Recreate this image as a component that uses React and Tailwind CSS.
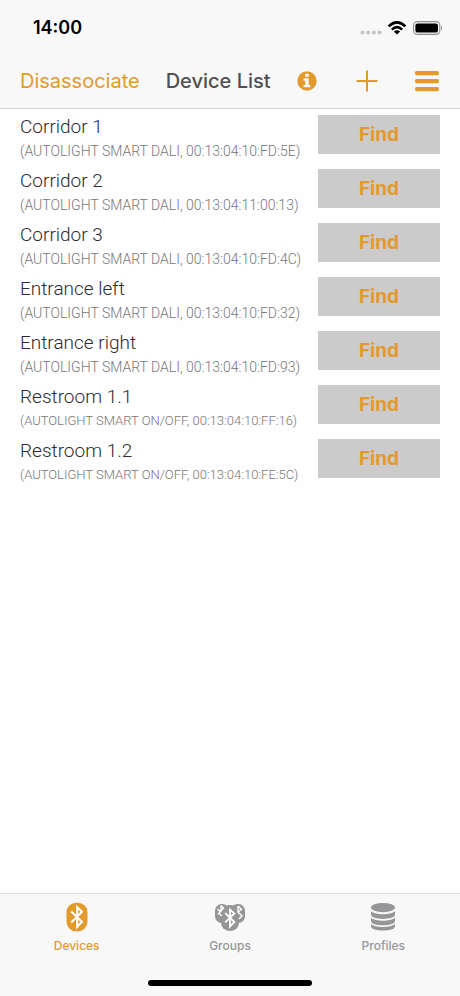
import React, { useState } from 'react';
import clsx from 'clsx';

const devices = [
  { name: 'Corridor 1', model: 'AUTOLIGHT SMART DALI', mac: '00:13:04:10:FD:5E' },
  { name: 'Corridor 2', model: 'AUTOLIGHT SMART DALI', mac: '00:13:04:11:00:13' },
  { name: 'Corridor 3', model: 'AUTOLIGHT SMART DALI', mac: '00:13:04:10:FD:4C' },
  { name: 'Entrance left', model: 'AUTOLIGHT SMART DALI', mac: '00:13:04:10:FD:32' },
  { name: 'Entrance right', model: 'AUTOLIGHT SMART DALI', mac: '00:13:04:10:FD:93' },
  { name: 'Restroom 1.1', model: 'AUTOLIGHT SMART ON/OFF', mac: '00:13:04:10:FF:16' },
  { name: 'Restroom 1.2', model: 'AUTOLIGHT SMART ON/OFF', mac: '00:13:04:10:FE:5C' },
];

const StatusBar = () => (
  <div className="flex h-14 items-center justify-between pr-4 pl-[33px]">
    <span className="text-[18px] leading-6 font-semibold text-black">14:00</span>
    <div className="flex items-center gap-1">
      <svg width="22" height="14" viewBox="0 0 22 14" className="fill-[#c4c4c6]">
        <circle cx="2.5" cy="11.5" r="2" />
        <circle cx="8.2" cy="11.5" r="2" />
        <circle cx="13.9" cy="11.5" r="2" />
        <circle cx="19.6" cy="11.5" r="2" />
      </svg>
      <svg width="22" height="14" viewBox="-2 0 22 14" fill="none" stroke="#000" strokeWidth="2.6">
        <path d="M0.6 5.4 Q9 -2.6 17.4 5.4" />
        <path d="M3.8 8.6 Q9 3.8 14.2 8.6" />
        <path d="M9 13.6 L5.9 10.5 Q9 8 12.1 10.5 Z" fill="#000" stroke="none" />
      </svg>
      <svg width="32" height="14" viewBox="-1 0 32 14">
        <rect x="0.6" y="0.6" width="26.2" height="12.8" rx="3.8" fill="none" stroke="#8e8e90" strokeWidth="1.1" />
        <rect x="2.4" y="2.4" width="22.6" height="9.2" rx="2.2" />
        <path d="M28 4.6 Q30.2 7 28 9.4 Z" fill="#8e8e90" />
      </svg>
    </div>
  </div>
);

const NavBar = () => (
  <div className="flex h-[52px] items-center gap-[26px] px-5 pb-0.5 text-[#e39a2d]">
    <button type="button" className="text-[20px] leading-6">Disassociate</button>
    <h1 className="text-[20px] leading-6 font-medium text-[#505052]">Device List</h1>
    <button type="button" aria-label="Information">
      <svg width="20" height="20" viewBox="0 0 20 20">
        <circle cx="10" cy="10" r="9.7" fill="currentColor" />
        <path d="M8.2 2.8h3.6v3H8.2zM6.6 7.3h5.1v6.6h1.6v2.4H6.6v-2.4h1.7V9.7H6.6z" fill="#f8f8f8" />
      </svg>
    </button>
    <div className="ml-auto flex items-center gap-9">
      <button type="button" aria-label="Add device">
        <svg width="22" height="22" viewBox="0 0 22 22" stroke="currentColor" strokeWidth="2">
          <path d="M11 0.5V21.5M0.5 11H21.5" />
        </svg>
      </button>
      <button type="button" aria-label="Menu">
        <svg width="26" height="22" viewBox="0 0 26 22" fill="currentColor">
          <rect x="1" y="1" width="24" height="4.2" rx="1.6" />
          <rect x="1" y="9" width="24" height="4.2" rx="1.6" />
          <rect x="1" y="17" width="24" height="4.2" rx="1.6" />
        </svg>
      </button>
    </div>
  </div>
);

const DeviceRow = ({ device }) => {
  // longer model names get a smaller line so they stay clear of the button
  const isLong = device.model.length > 20;

  return (
    <li className="flex h-[54px] items-start justify-between pt-1.5">
      <div className="font-['Roboto',sans-serif]">
        <div className="text-[19px] leading-6 font-light text-[#2c2c2e]">{device.name}</div>
        <div
          className={clsx(
            'leading-6 font-light whitespace-nowrap text-[#77777a]',
            isLong ? 'text-[13px]' : 'text-[14px]'
          )}
        >
          ({device.model}, {device.mac})
        </div>
      </div>
      <button
        type="button"
        className="h-[39px] w-[122px] shrink-0 bg-[#cbcbcb] text-[19px] leading-6 font-bold text-[#e39a2d]"
      >
        Find
      </button>
    </li>
  );
};

const DevicesIcon = () => (
  <svg width="32" height="30" viewBox="0 0 32 30">
    <rect x="5.5" y="0.8" width="21" height="28.4" rx="9.5" fill="currentColor" />
    <path d="M10.2 9.4 L21 19.8 L16.2 24.8 V5.2 L21 9.8 L10.2 20.4" fill="none" stroke="#fff" strokeWidth="2.1" />
  </svg>
);

const GroupsIcon = () => (
  <svg width="32" height="30" viewBox="0 0 32 30">
    <rect x="1" y="2" width="14" height="19" rx="6.5" fill="currentColor" />
    <rect x="17" y="2" width="14" height="19" rx="6.5" fill="currentColor" />
    <rect x="7" y="3" width="18" height="26" rx="8.5" fill="currentColor" />
    <g fill="none" stroke="#fff" strokeWidth="1.8">
      <path d="M11.2 11 L20.4 20 L16 24.5 V7.5 L20.4 11.5 L11.2 20.4" />
      <path d="M3.5 7 L6 9.5 M7 3.5 L9.5 6 L4 12.5 M7 3.5 V8.5 M6 12 L7.5 14" strokeWidth="1.4" />
      <path d="M24 4 V10 L28 14 L25 17 M24 4 L27.5 7.5 L24 10" strokeWidth="1.4" />
    </g>
  </svg>
);

const ProfilesIcon = () => (
  <svg width="32" height="30" viewBox="0 0 32 30" fill="currentColor">
    <ellipse cx="16" cy="5.6" rx="12" ry="4.6" />
    <path d="M4 9.2 C8 13.2 24 13.2 28 9.2 V12.6 C28 18.4 4 18.4 4 12.6 Z" />
    <path d="M4 15.8 C8 19.8 24 19.8 28 15.8 V19 C28 24.8 4 24.8 4 19 Z" />
    <path d="M4 22 C8 26 24 26 28 22 V24.2 C28 30 4 30 4 24.2 Z" />
  </svg>
);

const tabs = [
  { id: 'devices', label: 'Devices', Icon: DevicesIcon },
  { id: 'groups', label: 'Groups', Icon: GroupsIcon },
  { id: 'profiles', label: 'Profiles', Icon: ProfilesIcon },
];

const App = () => {
  const [activeTab, setActiveTab] = useState('devices');

  return (
    <div className="flex min-h-screen flex-col bg-[#fefefe] font-['Inter',sans-serif]">
      <header className="border-b border-[#d6d6d6] bg-[#f8f8f8]">
        <StatusBar />
        <NavBar />
      </header>

      <main className="flex-1 px-5">
        <ul>
          {devices.map((device) => (
            <DeviceRow key={device.mac} device={device} />
          ))}
        </ul>
      </main>

      <footer className="border-t border-[#e2e2e2] bg-[#f8f8f8]">
        <nav className="grid grid-cols-3 pt-2">
          {tabs.map(({ id, label, Icon }) => (
            <button
              key={id}
              type="button"
              onClick={() => setActiveTab(id)}
              className={clsx(
                'flex flex-col items-center gap-1 text-[12px] leading-5 font-medium',
                activeTab === id ? 'text-[#e39a2d]' : 'text-[#969698]'
              )}
            >
              <Icon />
              {label}
            </button>
          ))}
        </nav>
        {/* home indicator */}
        <div className="mx-auto mt-6 mb-2.5 h-1.5 w-[164px] rounded-full bg-black" />
      </footer>
    </div>
  );
};

export default App;
